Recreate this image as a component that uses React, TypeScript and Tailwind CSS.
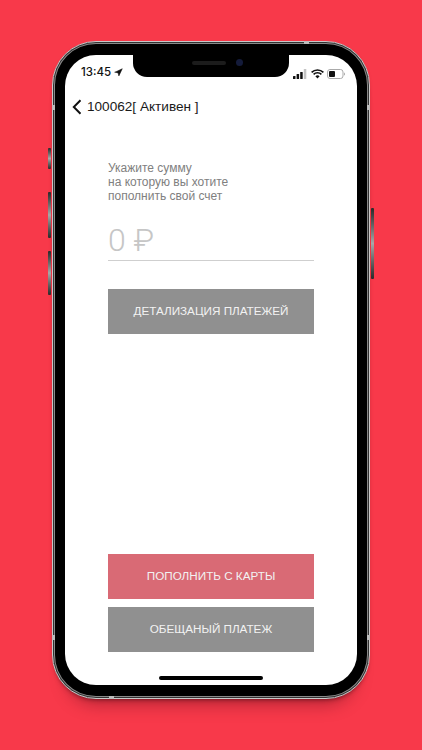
import { Navigation } from 'lucide-react';

function SideButton({ className }: { className: string }) {
  return <div className={`absolute w-[3px] rounded-[1px] bg-gradient-to-b from-[#2a2a2a] via-[#a8a8a8] to-[#2a2a2a] ${className}`} />;
}

function AntennaBand({ className }: { className: string }) {
  return <div className={`absolute bg-[#bdbdbd] ${className}`} />;
}

function StatusIcons() {
  return (
    <div className="flex flex-1 items-center justify-end gap-[3px] pr-[12px] pt-[2px]">
      <svg width="14" height="10" viewBox="0 0 14 10" className="mr-[1px]">
        <rect x="0" y="7" width="2.5" height="3" rx="0.5" fill="#111" />
        <rect x="3.6" y="5" width="2.5" height="5" rx="0.5" fill="#111" />
        <rect x="7.2" y="3" width="2.5" height="7" rx="0.5" fill="#111" />
        <rect x="10.8" y="0" width="2.5" height="10" rx="0.5" fill="#c4c4c4" />
      </svg>
      <svg width="13" height="10" viewBox="0 0 13 10">
        <path d="M0.6 3.4a8.4 8.4 0 0 1 11.8 0" fill="none" stroke="#111" strokeWidth="1.6" />
        <path d="M2.6 5.4a5.6 5.6 0 0 1 7.8 0" fill="none" stroke="#111" strokeWidth="1.6" />
        <path d="M4.4 7.2a3 3 0 0 1 4.2 0L6.5 9.6z" fill="#111" />
      </svg>
      <svg width="18" height="10" viewBox="0 0 18 10">
        <rect x="0.5" y="0.5" width="15.5" height="9" rx="2.5" fill="none" stroke="#aaa" />
        <rect x="2" y="2" width="6" height="6" rx="1" fill="#111" />
        <path d="M17 3.4c.7.3 1 1 1 1.6s-.3 1.3-1 1.6z" fill="#aaa" />
      </svg>
    </div>
  );
}

function ActionButton({ label, color }: { label: string; color: string }) {
  return (
    <button className={`h-[45px] w-full pb-[2px] text-[11.7px] text-[#f2f2f2] ${color}`}>{label}</button>
  );
}

export default function App() {
  return (
    <div className="h-[750px] w-[422px] overflow-hidden bg-[#f8394a] pt-[41px] font-['Liberation_Sans',sans-serif]">
      <div className="relative ml-[52px] h-[658px] w-[318px] rounded-[44px] border border-[#c9c9c9] bg-black px-[12px] py-[13px] shadow-[0_20px_18px_-16px_rgba(80,10,25,0.45),0_3px_5px_-3px_rgba(40,0,10,0.7),inset_0_0_0_1px_#333,inset_0_0_0_2px_#8a8a8a]">
        <SideButton className="left-[-5px] top-[106px] h-[21px]" />
        <SideButton className="left-[-5px] top-[150px] h-[46px]" />
        <SideButton className="left-[-5px] top-[209px] h-[44px]" />
        <SideButton className="right-[-5px] top-[166px] h-[71px]" />
        <AntennaBand className="left-[-1px] top-[63px] h-[5px] w-[3px]" />
        <AntennaBand className="right-[-1px] top-[63px] h-[5px] w-[3px]" />
        <AntennaBand className="right-[-1px] top-[593px] h-[5px] w-[3px]" />
        <AntennaBand className="left-[-1px] top-[593px] h-[5px] w-[3px]" />
        <AntennaBand className="left-[251px] top-[-1px] h-[3px] w-[5px]" />
        <AntennaBand className="bottom-[-1px] left-[56px] h-[3px] w-[5px]" />

        <div className="flex h-full flex-col overflow-hidden rounded-[31px] bg-white">
          <div className="flex h-[22px] shrink-0">
            <div className="flex w-[68px] shrink-0 items-center gap-[3px] pl-[16px] pt-[13px] font-['Inter',sans-serif] text-[11.5px] font-medium text-[#111]">
              <span>13:45</span>
              <Navigation size={9} fill="#111" strokeWidth={1.5} />
            </div>
            <div className="flex h-[22px] w-[156px] shrink-0 items-start justify-center gap-[10px] rounded-b-[14px] bg-black pl-[13px] pt-[4px]">
              <div className="mt-[2px] h-[4px] w-[34px] rounded-full bg-[#1c1c1c]" />
              <div className="h-[7px] w-[7px] rounded-full bg-[#141b3a]" />
            </div>
            <div className="flex w-[68px] shrink-0 pt-[13px]">
              <StatusIcons />
            </div>
          </div>

          <div className="mt-[19px] flex h-[22px] shrink-0 items-center pl-[7px] text-[13.6px] text-[#1a1a1a]">
            <svg width="10" height="16" viewBox="0 0 10 16" className="mr-[5px]">
              <path d="M8.5 1.2 1.8 8l6.7 6.8" fill="none" stroke="#111" strokeWidth="2" />
            </svg>
            <span>100062[ Активен ]</span>
          </div>

          <div className="flex flex-1 flex-col px-[43px]">
            <p className="mt-[43px] text-[12px] leading-[14px] text-[#808080]">
              Укажите сумму
              <br />
              на которую вы хотите
              <br />
              пополнить свой счет
            </p>
            <div className="mt-[18px] h-[40px] border-b border-[#cfcfcf] font-['Roboto',sans-serif] text-[32px] leading-[38px] font-light text-[#c6c6c6]">
              0 ₽
            </div>
            <div className="mt-[28px]">
              <ActionButton label="ДЕТАЛИЗАЦИЯ ПЛАТЕЖЕЙ" color="bg-[#909090]" />
            </div>
            <div className="mt-auto flex flex-col gap-[8px]">
              <ActionButton label="ПОПОЛНИТЬ С КАРТЫ" color="bg-[#d96a75]" />
              <ActionButton label="ОБЕЩАНЫЙ ПЛАТЕЖ" color="bg-[#909090]" />
            </div>
          </div>

          <div className="flex h-[33px] shrink-0 justify-center pt-[24px]">
            <div className="h-[3.5px] w-[104px] rounded-full bg-black" />
          </div>
        </div>
      </div>
    </div>
  );
}
